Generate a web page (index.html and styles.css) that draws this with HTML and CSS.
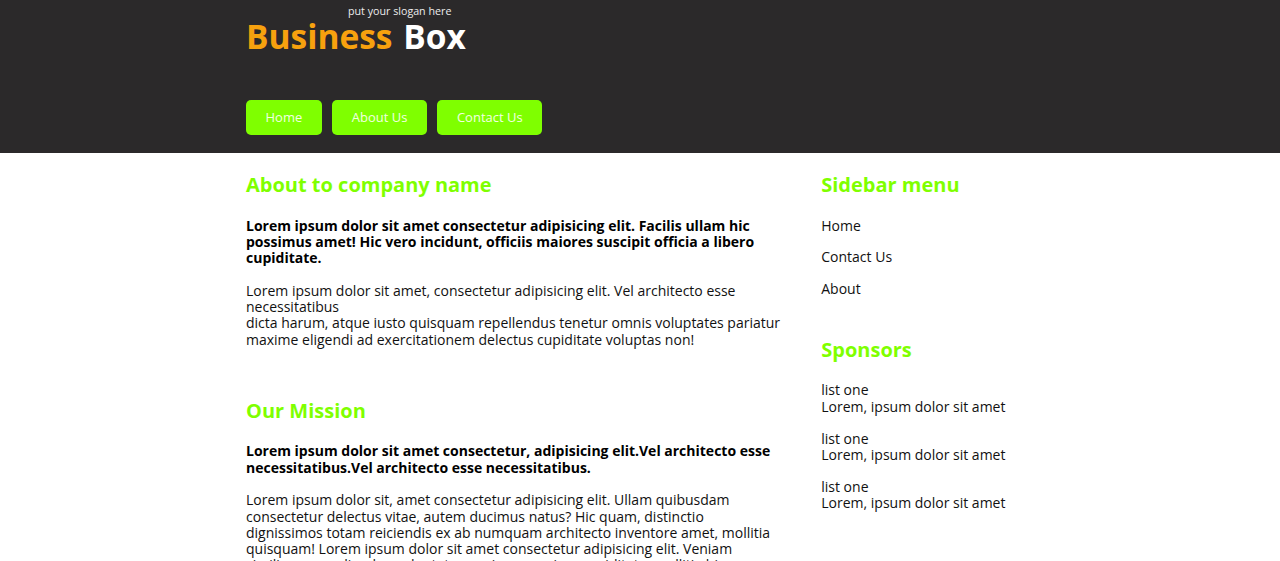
FILE: index.html
```html
<!DOCTYPE html>
<html lang="en">
<head>
<meta charset="utf-8">
<title>Business Box</title>
<link rel="stylesheet" href="styles.css">
</head>
<body>
<header class="site-header">
  <div class="container">
    <p class="slogan">put your slogan here</p>
    <h1 class="logo"><span class="logo-accent">Business</span> Box</h1>
    <nav class="nav">
      <a class="nav-btn" href="#">Home</a>
      <a class="nav-btn" href="#">About Us</a>
      <a class="nav-btn" href="#">Contact Us</a>
    </nav>
  </div>
</header>
<div class="container content">
  <main class="main">
    <section class="section">
      <h2 class="heading">About to company name</h2>
      <p class="lead">Lorem ipsum dolor sit amet consectetur adipisicing elit. Facilis ullam hic possimus amet! Hic vero incidunt, officiis maiores suscipit officia a libero cupiditate.</p>
      <p class="text">Lorem ipsum dolor sit amet, consectetur adipisicing elit. Vel architecto esse necessitatibus<br>dicta harum, atque iusto quisquam repellendus tenetur omnis voluptates pariatur maxime eligendi ad exercitationem delectus cupiditate voluptas non!</p>
    </section>
    <section class="section section-gap">
      <h2 class="heading">Our Mission</h2>
      <p class="lead">Lorem ipsum dolor sit amet consectetur, adipisicing elit.Vel architecto esse necessitatibus.Vel architecto esse necessitatibus.</p>
      <p class="text">Lorem ipsum dolor sit, amet consectetur adipisicing elit. Ullam quibusdam consectetur delectus vitae, autem ducimus natus? Hic quam, distinctio dignissimos totam reiciendis ex ab numquam architecto inventore amet, mollitia quisquam! Lorem ipsum dolor sit amet consectetur adipisicing elit. Veniam similique repudiandae voluptatum quia ex maxime cupiditate, mollitia hic dolorum.</p>
    </section>
  </main>
  <aside class="sidebar">
    <h2 class="heading">Sidebar menu</h2>
    <ul class="side-menu">
      <li><a href="#">Home</a></li>
      <li><a href="#">Contact Us</a></li>
      <li><a href="#">About</a></li>
    </ul>
    <h2 class="heading sponsors-heading">Sponsors</h2>
    <p class="sponsor">list one<br>Lorem, ipsum dolor sit amet</p>
    <p class="sponsor">list one<br>Lorem, ipsum dolor sit amet</p>
    <p class="sponsor">list one<br>Lorem, ipsum dolor sit amet</p>
  </aside>
</div>
</body>
</html>
```
FILE: styles.css
```css
* { box-sizing: border-box; }

body {
  margin: 0;
  background: #ffffff;
  color: #111111;
  font-family: "Open Sans", "Noto Sans", sans-serif;
  font-size: 14px;
  line-height: 1.165;
}

.container {
  width: 788px;
  margin: 0 auto;
}

.site-header {
  background: #2b292a;
  padding: 4px 0 18px;
}

.slogan {
  margin: 0 0 0 102px;
  font-size: 10.7px;
  line-height: 14px;
  font-weight: 400;
  color: #ececec;
}

.logo {
  margin: 0;
  font-size: 33.5px;
  line-height: 36px;
  font-weight: 700;
  word-spacing: 2px;
  color: #ffffff;
}

.logo-accent { color: #f7a10e; }

.nav {
  display: flex;
  gap: 10.5px;
  margin-top: 46px;
}

.nav-btn {
  display: flex;
  align-items: center;
  height: 35px;
  padding: 0 19.5px;
  background: #7fff00;
  border-radius: 5px;
  color: #f2ffe2;
  font-size: 13px;
  text-decoration: none;
}

.content {
  display: flex;
  justify-content: space-between;
  align-items: flex-start;
}

.main { width: 536px; }
.sidebar { width: 27%; }

.heading {
  margin: 20px 0 21.6px;
  font-size: 20px;
  line-height: 23px;
  font-weight: 700;
  color: #7fff00;
}

.lead {
  margin: 0;
  font-weight: 700;
  color: #000000;
}

.text {
  margin: 16.4px 0 0;
}

.section-gap { margin-top: 50.6px; }

.side-menu {
  list-style: none;
  margin: 0;
  padding: 0;
  display: flex;
  flex-direction: column;
  gap: 15.2px;
}

.side-menu a {
  color: #111111;
  text-decoration: none;
}

.sponsors-heading { margin-top: 41px; }

.sponsor { margin: 0 0 15.6px; }
```
